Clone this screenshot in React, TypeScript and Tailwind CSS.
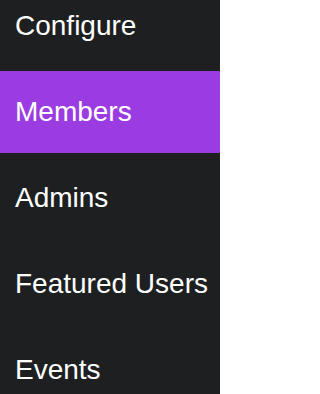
const items = [
  { label: "Configure", active: false },
  { label: "Members", active: true },
  { label: "Admins", active: false },
  { label: "Featured Users", active: false },
  { label: "Events", active: false },
];

export default function App() {
  return (
    <div className="h-[394px] w-[220px] overflow-hidden bg-[#1e1f21] font-['Liberation_Sans',Arial,sans-serif]">
      <nav className="-mt-[15px] flex flex-col gap-1">
        {items.map((item) => (
          <a
            key={item.label}
            href="#"
            className={
              item.active
                ? "flex h-[82px] items-center bg-[#9a3ce2] pl-[15px] text-[28px] leading-none text-white"
                : "flex h-[82px] items-center pl-[15px] text-[28px] leading-none text-white"
            }
          >
            {item.label}
          </a>
        ))}
      </nav>
    </div>
  );
}
